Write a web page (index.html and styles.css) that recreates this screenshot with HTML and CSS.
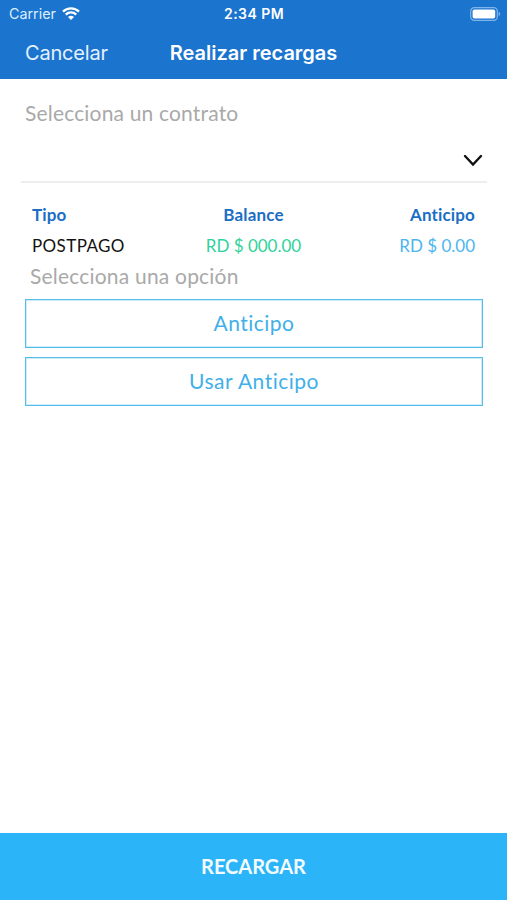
FILE: index.html
```html
<!DOCTYPE html>
<html lang="es">
<head>
    <meta charset="UTF-8">
    <meta name="viewport" content="width=device-width, initial-scale=1.0">
    <title>Realizar recargas</title>
    <link rel="stylesheet" href="styles.css">
</head>
<body>
    <header class="header">
        <div class="status-bar">
            <div class="carrier">
                <span class="carrier-name">Carrier</span>
                <svg class="wifi" width="18" height="14" viewBox="0 0 18 14">
                    <path d="M1 4.6a11.4 11.4 0 0 1 16 0" />
                    <path d="M3.8 7.6a7.4 7.4 0 0 1 10.4 0" />
                    <path class="wifi-dot" d="M9 13.1L6 10.1a4.3 4.3 0 0 1 6 0z" />
                </svg>
            </div>
            <span class="time">2:34 PM</span>
            <svg class="battery" width="31" height="14" viewBox="0 0 31 14">
                <rect class="battery-case" x="0.7" y="0.7" width="26.6" height="12.6" rx="3.6" />
                <rect class="battery-level" x="2.6" y="2.5" width="22.6" height="9" rx="1.8" />
                <path class="battery-tip" d="M28.7 4.8a2.4 2.4 0 0 1 0 4.4z" />
            </svg>
        </div>
        <nav class="nav-bar">
            <a class="cancel"><span>Cancelar</span></a>
            <h1><span>Realizar recargas</span></h1>
        </nav>
    </header>

    <main class="content">
        <label class="contract-label"><span>Selecciona un contrato</span></label>
        <div class="contract-select">
            <svg width="20" height="13" viewBox="0 0 20 13">
                <path d="M2 2l8 8.5L18 2" />
            </svg>
        </div>

        <div class="summary">
            <div class="summary-item">
                <h2 class="tipo">Tipo</h2>
                <p class="tipo-value">POSTPAGO</p>
            </div>
            <div class="summary-item center">
                <h2 class="balance">Balance</h2>
                <p class="balance-value">RD $ 000.00</p>
            </div>
            <div class="summary-item right">
                <h2 class="anticipo">Anticipo</h2>
                <p class="anticipo-value">RD $ 0.00</p>
            </div>
        </div>

        <p class="option-label"><span>Selecciona una opción</span></p>
        <button type="button" class="option"><span>Anticipo</span></button>
        <button type="button" class="option"><span>Usar Anticipo</span></button>
    </main>

    <button type="button" class="recargar"><span>RECARGAR</span></button>
</body>
</html>
```
FILE: styles.css
```css
* {
    box-sizing: border-box;
}
body {
    margin: 0;
    height: 100vh;
    display: flex;
    flex-direction: column;
    background-color: #fff;
    font-family: Lato, "Liberation Sans", sans-serif;
    font-variant-ligatures: none;
}
h1, h2, p {
    margin: 0;
}
button {
    font-family: inherit;
    cursor: pointer;
}
.header {
    height: 79px;
    background-color: #1b74ce;
    color: #fff;
    font-family: Inter, "Liberation Sans", sans-serif;
}
.status-bar {
    display: grid;
    grid-template-columns: 1fr auto 1fr;
    align-items: center;
    height: 27px;
    padding: 0 6px 0 9px;
}
.carrier {
    display: flex;
    align-items: center;
    gap: 6px;
    color: #dceeff;
}
.carrier-name {
    font-size: 14.3px;
    line-height: 27px;
}
.wifi {
    fill: none;
    stroke: #fff;
    stroke-width: 2.3;
}
.wifi-dot {
    fill: #fff;
    stroke: none;
}
.time {
    margin-right: 2px;
    font-size: 14px;
    font-weight: 600;
    letter-spacing: 0.45px;
}
.battery {
    justify-self: end;
}
.battery-case {
    fill: none;
    stroke: #7fb5ec;
    stroke-width: 1.2;
}
.battery-level {
    fill: #fff;
}
.battery-tip {
    fill: #7fb5ec;
}
.nav-bar {
    display: grid;
    grid-template-columns: 1fr auto 1fr;
    align-items: center;
    height: 51px;
    padding: 0 25px;
}
.cancel {
    font-size: 20px;
    letter-spacing: -0.2px;
    color: #e4f2ff;
}
.nav-bar h1 {
    font-size: 20px;
    font-weight: 600;
}
.content {
    flex: 1;
    padding: 19px 25px 0;
}
.contract-label {
    display: block;
    font-size: 21px;
    line-height: 30px;
    letter-spacing: 0.17px;
    color: #a9a9a9;
}
.contract-select {
    display: flex;
    justify-content: flex-end;
    align-items: center;
    height: 55px;
    margin: 0 -5px 0 -4px;
    padding: 12px 4px 0 0;
    border-bottom: 2px solid #eee;
}
.contract-select svg {
    fill: none;
    stroke: #111;
    stroke-width: 2.4;
    stroke-linecap: round;
}
.summary {
    display: grid;
    grid-template-columns: 1fr 1fr 1fr;
    margin-top: 17px;
    padding: 0 7px;
}
.summary-item h2 {
    font-size: 17px;
    line-height: 30px;
    letter-spacing: 0.15px;
    color: #1b6ec4;
}
.summary-item p {
    font-size: 17px;
    line-height: 32px;
    margin-bottom: -2px;
}
.summary-item.center {
    text-align: center;
}
.summary-item.right {
    text-align: right;
}
.summary .tipo-value {
    letter-spacing: 0.4px;
    color: #111;
}
.summary .balance-value {
    color: #2fd39b;
}
.summary .anticipo-value {
    color: #4db5ee;
}
.option-label {
    padding-left: 5px;
    font-size: 21px;
    line-height: 32px;
    letter-spacing: 0.2px;
    color: #a9a9a9;
}
.option {
    display: block;
    width: calc(100% + 1px);
    height: 49px;
    margin-top: 7px;
    padding: 0 0 2px;
    border: 1px solid #56bce8;
    box-shadow: inset 0 0 0 1px #cdebf8;
    background-color: #fff;
    font-size: 21px;
    letter-spacing: 0.5px;
    color: #3fb0e8;
}
.option + .option {
    margin-top: 9px;
}
.recargar {
    height: 67px;
    padding: 0 0 2px;
    border: none;
    background-color: #2bb4f7;
    font-size: 20px;
    font-weight: 700;
    color: #f2fbff;
}
```
